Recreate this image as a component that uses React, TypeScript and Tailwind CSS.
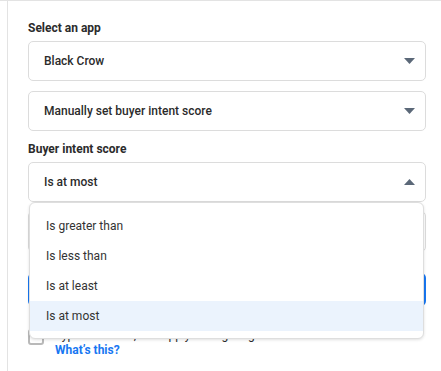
const font = { fontFamily: 'Roboto, "Liberation Sans", sans-serif' };

const Caret = ({ up = false }: { up?: boolean }) => (
  <svg width="11" height="6" viewBox="0 0 11 6" className="shrink-0">
    {up ? <path d="M0 6 L5.5 0 L11 6 Z" fill="#5b6878" /> : <path d="M0 0 L11 0 L5.5 6 Z" fill="#5b6878" />}
  </svg>
);

const Select = ({ value, open = false }: { value: string; open?: boolean }) => (
  <div className="flex h-[40px] items-center justify-between rounded-[5px] border border-[#dcdcdc] bg-white pl-[15px] pr-[10px]">
    <span className="text-[12px] font-medium text-[#2b2b2b]">{value}</span>
    <Caret up={open} />
  </div>
);

const options = ['Is greater than', 'Is less than', 'Is at least', 'Is at most'];

export default function App() {
  return (
    <div className="h-[371px] w-[441px] overflow-hidden border-t border-[#e3e3e3] bg-white" style={font}>
      <div className="relative ml-[7px] h-full border-l border-[#e3e3e3] pl-[20px] pr-[15px] pt-[19px]">
        <div className="mb-[5px] text-[12px] font-bold leading-[16px] text-[#2b2b2b]">Select an app</div>
        <Select value="Black Crow" />
        <div className="mt-[10px]">
          <Select value="Manually set buyer intent score" />
        </div>
        <div className="mb-[5px] mt-[10px] text-[12px] font-bold leading-[16px] text-[#2b2b2b]">Buyer intent score</div>
        <Select value="Is at most" open />
        <div className="mt-[9px] h-[41px] rounded-[5px] border border-[#dcdcdc]" />
        <div className="mt-[21px] h-[33px] rounded-[5px] bg-[#1877f2]" />
        <div className="mt-[22px] flex gap-[11px]">
          <div className="mt-[1px] h-[16px] w-[16px] shrink-0 rounded-[3px] border-2 border-[#b9b9b9]" />
          <div className="text-[12px] leading-[15px]">
            <div className="text-[#2b2b2b]">Type in a value, and apply to targeting</div>
            <div className="font-bold text-[#1877f2]">What’s this?</div>
          </div>
        </div>

        <div className="absolute left-[21px] top-[201px] w-[395px] rounded-[6px] border border-[#dedede] bg-white pb-[7px] pt-[8px] shadow-[0_1px_3px_rgba(0,0,0,0.12)]">
          {options.map((o) => (
            <div
              key={o}
              className={`flex h-[30px] items-center pl-[16px] text-[12px] text-[#333333] ${o === 'Is at most' ? 'bg-[#ebf3fd]' : ''}`}
            >
              {o}
            </div>
          ))}
        </div>
      </div>
    </div>
  );
}
